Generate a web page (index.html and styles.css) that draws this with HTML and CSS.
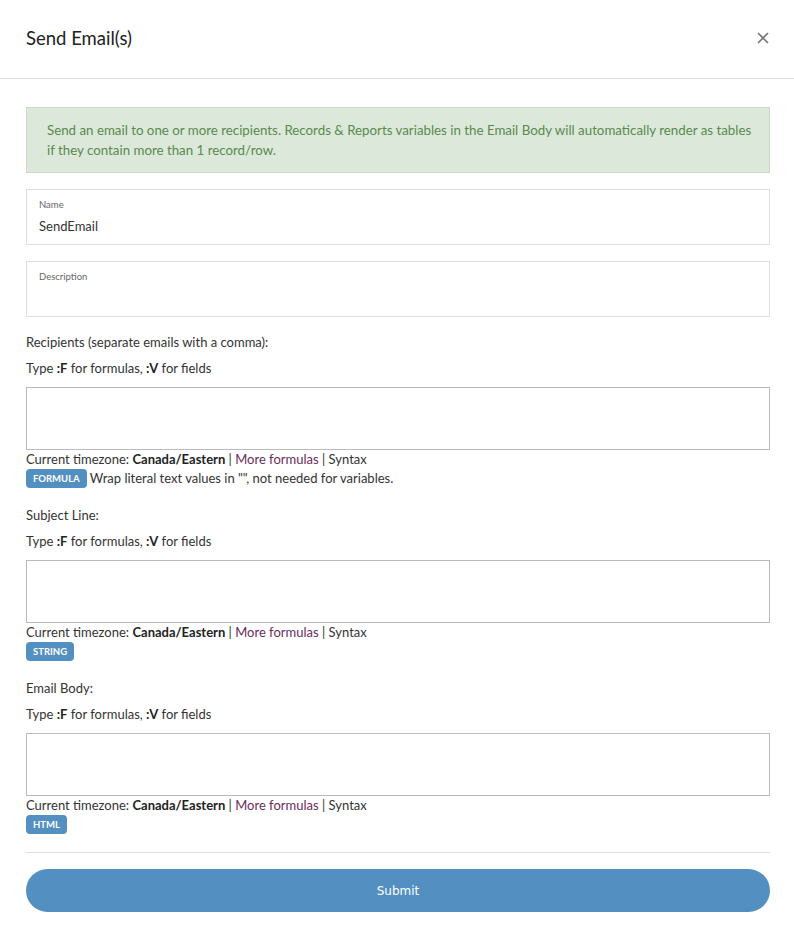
FILE: index.html
```html
<!DOCTYPE html>
<html lang="en">
<head>
    <meta charset="UTF-8">
    <meta name="viewport" content="width=device-width, initial-scale=1.0">
    <title>Send Email(s)</title>
    <link rel="stylesheet" href="styles.css">
</head>
<body>
    <div class="modal">
        <div class="modal-header">
            <h2>Send Email(s)</h2>
            <button class="close" type="button" aria-label="Close">
                <svg width="12" height="12" viewBox="0 0 12 12"><path d="M1 1L11 11M11 1L1 11" stroke="#777" stroke-width="1.6" fill="none"/></svg>
            </button>
        </div>

        <div class="modal-body">
            <div class="alert">
                Send an email to one or more recipients. Records &amp; Reports variables in the Email Body will automatically render as tables if they contain more than 1 record/row.
            </div>

            <div class="field">
                <label>Name</label>
                <div class="value">SendEmail</div>
            </div>

            <div class="field">
                <label>Description</label>
                <div class="value"></div>
            </div>

            <div class="section">
                <p class="label">Recipients (separate emails with a comma):</p>
                <p class="hint">Type <b>:F</b> for formulas, <b>:V</b> for fields</p>
                <div class="editor"></div>
                <div class="meta">Current timezone: <b>Canada/Eastern</b> | <a href="#">More formulas</a> | Syntax</div>
                <div class="type-row"><span class="badge">FORMULA</span> Wrap literal text values in "", not needed for variables.</div>
            </div>

            <div class="section">
                <p class="label">Subject Line:</p>
                <p class="hint">Type <b>:F</b> for formulas, <b>:V</b> for fields</p>
                <div class="editor"></div>
                <div class="meta">Current timezone: <b>Canada/Eastern</b> | <a href="#">More formulas</a> | Syntax</div>
                <div class="type-row"><span class="badge">STRING</span></div>
            </div>

            <div class="section">
                <p class="label">Email Body:</p>
                <p class="hint">Type <b>:F</b> for formulas, <b>:V</b> for fields</p>
                <div class="editor"></div>
                <div class="meta">Current timezone: <b>Canada/Eastern</b> | <a href="#">More formulas</a> | Syntax</div>
                <div class="type-row"><span class="badge">HTML</span></div>
            </div>

            <hr>
            <button class="submit" type="submit">Submit</button>
        </div>
    </div>
</body>
</html>
```

FILE: styles.css
```css
body {
    font-family: Lato, "Open Sans", sans-serif;
    margin: 0;
    padding: 0;
    background-color: #fff;
    color: #333;
    font-size: 13px;
}
.modal {
    width: 794px;
}
.modal-header {
    display: flex;
    align-items: center;
    justify-content: space-between;
    height: 78px;
    padding: 0 26px;
    border-bottom: 1px solid #ddd;
}
.modal-header h2 {
    margin: 0 0 2px 0;
    font-size: 18.5px;
    font-weight: normal;
    color: #222;
}
.close {
    background: none;
    border: none;
    padding: 0;
    margin-right: -1px;
    margin-bottom: 2px;
    cursor: pointer;
    display: flex;
}
.modal-body {
    padding: 28px 24px 20px 26px;
}
.alert {
    background-color: #dce8da;
    border: 1px solid #cadcc7;
    color: #5a8a4e;
    font-size: 13.3px;
    padding: 12px 8px 12px 20px;
    line-height: 20px;
    margin-bottom: 16px;
}
.field {
    box-sizing: border-box;
    border: 1px solid #ddd;
    height: 56px;
    padding: 0 12px;
    margin-bottom: 16px;
}
.field label {
    display: block;
    font-size: 9.5px;
    color: #666;
    margin-top: 9px;
    line-height: 12px;
}
.field .value {
    margin-top: 6px;
    line-height: 18px;
}
.section {
    margin-bottom: 18px;
}
.section p {
    margin: 0;
    line-height: 18px;
}
.section .label {
    margin-bottom: 8px;
}
.section .hint {
    margin-bottom: 10px;
}
.hint b, .meta b {
    color: #222;
}
.editor {
    box-sizing: border-box;
    border: 1px solid #bbb;
    height: 63px;
}
.meta {
    line-height: 18px;
}
.meta a {
    color: #6b2d5c;
    text-decoration: none;
}
.type-row {
    line-height: 19px;
    margin-top: 1px;
}
.badge {
    display: inline-block;
    background-color: #548fc2;
    color: #fff;
    font-size: 9.5px;
    font-weight: bold;
    border-radius: 4px;
    padding: 0 7px;
    line-height: 19px;
    vertical-align: top;
}
hr {
    border: none;
    border-top: 1px solid #ddd;
    margin: 0 0 16px 0;
}
.submit {
    display: block;
    width: 100%;
    height: 43px;
    border: none;
    border-radius: 22px;
    background-color: #538fc1;
    color: #fff;
    font-family: "DejaVu Sans", sans-serif;
    font-size: 12px;
    cursor: pointer;
}
```
